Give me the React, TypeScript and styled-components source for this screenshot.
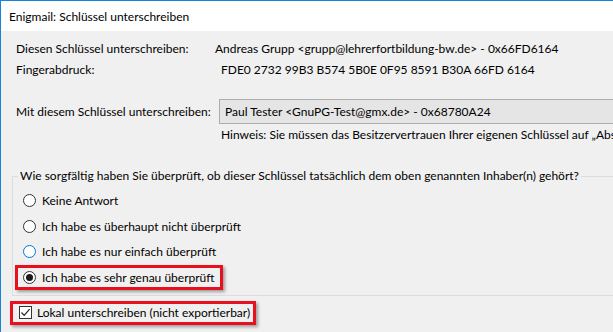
import React from 'react';
import styled, { createGlobalStyle, css } from 'styled-components';

const GlobalStyle = createGlobalStyle`
    html, body {
        margin: 0;
        padding: 0;
        overflow: hidden;
    }
    body {
        font-family: Lato, "Segoe UI", sans-serif;
        font-size: 12px;
        color: #000;
    }
`;

const Window = styled.div`
    width: 613px;
    height: 332px;
    box-sizing: border-box;
    border-top: 1px solid #1883d7;
    border-left: 1px solid #1883d7;
    background: #f0f0f0;
    display: flex;
    flex-direction: column;
    overflow: hidden;
`;

const TitleBar = styled.div`
    height: 30px;
    flex: none;
    background: #fff;
    display: flex;
    align-items: center;
    padding-left: 8px;
`;

const Content = styled.div`
    flex: 1;
    padding: 7px 0 0 15px;
    white-space: nowrap;
`;

const InfoGrid = styled.div`
    display: grid;
    grid-template-columns: 199px max-content;
    grid-auto-rows: 21px;
    align-items: center;
`;

const Value = styled.span<{ $indent?: number }>`
    padding-left: ${(p) => p.$indent || 0}px;
`;

const SelectRow = styled.div`
    display: flex;
    align-items: center;
    margin-top: 19px;
`;

const SelectLabel = styled.span`
    width: 203px;
    flex: none;
`;

const SelectBox = styled.div`
    height: 25px;
    width: 500px;
    flex: none;
    box-sizing: border-box;
    border: 1px solid #adadad;
    background: #e5e5e5;
    display: flex;
    align-items: center;
    padding-left: 5px;
`;

const Hint = styled.div`
    margin-left: 205px;
    line-height: 21px;
`;

const Group = styled.fieldset`
    margin: 23px 0 0 -4px;
    width: 700px;
    border: 1px solid #dcdcdc;
    padding: 7px 0 8px 5px;
`;

const Legend = styled.legend`
    padding: 0 2px;
    line-height: 16px;
`;

const RadioList = styled.div`
    display: flex;
    flex-direction: column;
    gap: 6.5px;
`;

const marked = css`
    box-shadow: 0 0 0 3px #e8101c, 2px 2px 3px 3px rgba(0, 0, 0, 0.35);
`;

const RadioRow = styled.label<{ $marked?: boolean }>`
    display: flex;
    align-items: center;
    gap: 6px;
    height: 19px;
    width: fit-content;
    padding: 0 5px;
    ${(p) => p.$marked && marked}
`;

const RadioCircle = styled.span<{ $checked?: boolean; $hover?: boolean }>`
    width: 13px;
    height: 13px;
    box-sizing: border-box;
    border-radius: 50%;
    border: 1px solid ${(p) => (p.$hover ? '#0078d7' : '#333')};
    background: #fff;
    display: flex;
    align-items: center;
    justify-content: center;
    &::after {
        content: '';
        display: ${(p) => (p.$checked ? 'block' : 'none')};
        width: 7px;
        height: 7px;
        border-radius: 50%;
        background: #1a1a1a;
    }
`;

const CheckRow = styled.label<{ $marked?: boolean }>`
    display: flex;
    align-items: center;
    gap: 5px;
    height: 18px;
    width: fit-content;
    margin: 8px 0 0 -3px;
    padding: 0 3px 0 6px;
    ${(p) => p.$marked && marked}
`;

const CheckBox = styled.span`
    width: 13px;
    height: 13px;
    box-sizing: border-box;
    border: 1px solid #333;
    background: #fff;
    display: flex;
    align-items: center;
    justify-content: center;
`;

const options = [
    { label: 'Keine Antwort' },
    { label: 'Ich habe es überhaupt nicht überprüft' },
    { label: 'Ich habe es nur einfach überprüft', hover: true },
    { label: 'Ich habe es sehr genau überprüft', checked: true, marked: true },
];

export default function App() {
    return (
        <>
            <GlobalStyle />
            <Window>
                <TitleBar>Enigmail: Schlüssel unterschreiben</TitleBar>
                <Content>
                    <InfoGrid>
                        <span>Diesen Schlüssel unterschreiben:</span>
                        <Value>Andreas Grupp &lt;grupp@lehrerfortbildung-bw.de&gt; - 0x66FD6164</Value>
                        <span>Fingerabdruck:</span>
                        <Value $indent={6}>FDE0 2732 99B3 B574 5B0E 0F95 8591 B30A 66FD 6164</Value>
                    </InfoGrid>
                    <SelectRow>
                        <SelectLabel>Mit diesem Schlüssel unterschreiben:</SelectLabel>
                        <SelectBox>Paul Tester &lt;GnuPG-Test@gmx.de&gt; - 0x68780A24</SelectBox>
                    </SelectRow>
                    <Hint>Hinweis: Sie müssen das Besitzervertrauen Ihrer eigenen Schlüssel auf „Absolut“ setzen</Hint>
                    <Group>
                        <Legend>
                            Wie sorgfältig haben Sie überprüft, ob dieser Schlüssel tatsächlich dem oben genannten Inhaber(n) gehört?
                        </Legend>
                        <RadioList>
                            {options.map((o) => (
                                <RadioRow key={o.label} $marked={o.marked}>
                                    <RadioCircle $checked={o.checked} $hover={o.hover} />
                                    {o.label}
                                </RadioRow>
                            ))}
                        </RadioList>
                    </Group>
                    <CheckRow $marked>
                        <CheckBox>
                            <svg width="11" height="11" viewBox="0 0 11 11">
                                <path d="M1.5 5.5 L4.2 8.3 L9.6 2.2" fill="none" stroke="#222" strokeWidth="1.2" />
                            </svg>
                        </CheckBox>
                        Lokal unterschreiben (nicht exportierbar)
                    </CheckRow>
                </Content>
            </Window>
        </>
    );
}
